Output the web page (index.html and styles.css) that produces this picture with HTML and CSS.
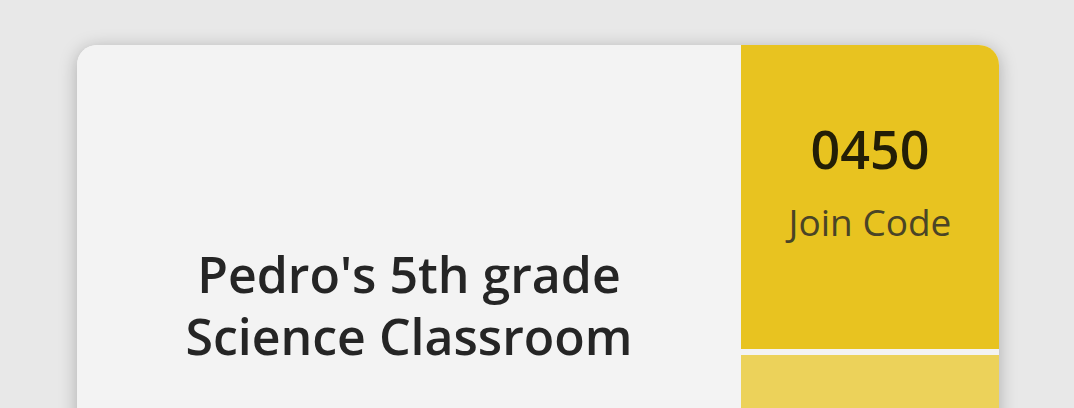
FILE: index.html
```html
<!DOCTYPE html>
<html lang="en">
<head>
<meta charset="utf-8">
<title>Classroom</title>
<link rel="stylesheet" href="styles.css">
</head>
<body>
  <div class="card">
    <div class="card-main">
      <h1 class="class-title">Pedro's 5th grade<br>Science Classroom</h1>
    </div>
    <div class="card-side">
      <div class="code-box">
        <div class="code-value">0450</div>
        <div class="code-label">Join Code</div>
      </div>
      <div class="side-gap"></div>
      <div class="side-bottom"></div>
    </div>
  </div>
</body>
</html>
```

FILE: styles.css
```css
html, body {
  margin: 0;
  padding: 0;
  height: 100%;
  overflow: hidden;
}

body {
  background: #e8e8e8;
  font-family: "Open Sans", "Noto Sans", sans-serif;
  padding: 45px 0 0 77px;
  box-sizing: border-box;
}

.card {
  display: flex;
  width: 922px;
  height: 520px;
  border-radius: 20px;
  overflow: hidden;
  background: #f3f3f3;
  box-shadow: 0 3px 18px rgba(0, 0, 0, 0.26);
}

.card-main {
  flex: 1;
  display: flex;
  align-items: center;
  justify-content: center;
  background: #f3f3f3;
}

.class-title {
  margin: 0;
  font-size: 50px;
  font-weight: 600;
  line-height: 62px;
  color: #252525;
  text-align: center;
  letter-spacing: 0;
}

.card-side {
  width: 258px;
  display: flex;
  flex-direction: column;
}

.code-box {
  height: 304px;
  background: #e8c320;
  display: flex;
  flex-direction: column;
  align-items: center;
  padding-top: 72px;
  box-sizing: border-box;
}

.code-value {
  font-size: 52px;
  font-weight: 600;
  line-height: 64px;
  color: #231e06;
}

.code-label {
  margin-top: 18px;
  font-size: 37px;
  line-height: 46px;
  color: #4a4426;
}

.side-gap {
  height: 6px;
  background: #f3f3f3;
}

.side-bottom {
  flex: 1;
  background: #ecd25a;
}
```
